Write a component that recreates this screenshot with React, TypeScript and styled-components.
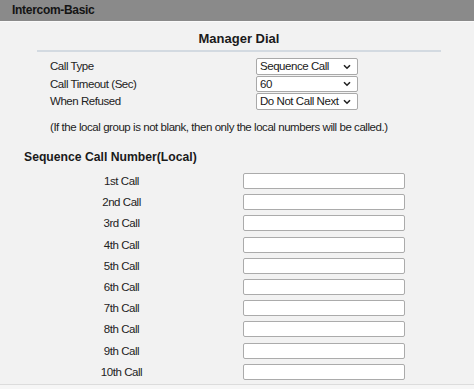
import styled, { createGlobalStyle } from "styled-components";

const GlobalStyle = createGlobalStyle`
  html, body {
    margin: 0;
    padding: 0;
    background: #f2f2f2;
  }
  body {
    font-family: "Liberation Sans", Arial, sans-serif;
    color: #222;
  }
`;

const Page = styled.div`
  width: 474px;
  height: 389px;
  overflow: hidden;
  background: #f2f2f2;
  display: flex;
  flex-direction: column;
`;

const Header = styled.div`
  height: 21px;
  line-height: 21px;
  background: #8a8a8a;
  border-bottom: 1px solid #fafafa;
  padding-left: 12px;
  font-size: 12px;
  font-weight: bold;
  letter-spacing: -0.3px;
  color: #141414;
`;

const Panel = styled.div`
  margin: 0 33px 0 37px;
  display: flex;
  flex-direction: column;
`;

const PanelTitle = styled.div`
  text-align: center;
  font-size: 13px;
  line-height: 16px;
  font-weight: bold;
  color: #1a1a1a;
  padding-top: 9px;
  height: 19px;
  border-bottom: 2px solid #d3dae1;
`;

const SettingRows = styled.div`
  display: flex;
  flex-direction: column;
  gap: 1.5px;
  margin-top: 6px;
  padding-left: 13px;
`;

const SettingRow = styled.div`
  display: grid;
  grid-template-columns: 206px 102px;
  align-items: center;
  height: 16px;
`;

const Label = styled.span`
  font-size: 11.5px;
  letter-spacing: -0.45px;
  color: #222;
  white-space: nowrap;
`;

const SelectBox = styled.div`
  position: relative;
  width: 102px;
  height: 16.5px;
  box-sizing: border-box;
  border: 1px solid #a9a9a9;
  border-radius: 2px;
  background: #fff;
  font-size: 11.5px;
  letter-spacing: -0.45px;
  line-height: 14px;
  padding-left: 3px;
  color: #1a1a1a;
  white-space: nowrap;
`;

const Chevron = styled.svg`
  position: absolute;
  right: 6px;
  top: 4.5px;
`;

const Note = styled.div`
  font-size: 11.5px;
  line-height: 14px;
  letter-spacing: -0.45px;
  color: #222;
  padding-left: 13px;
  margin-top: 11px;
  white-space: nowrap;
`;

const SectionTitle = styled.div`
  margin: 15.5px 0 0 24px;
  font-size: 12.2px;
  line-height: 15px;
  font-weight: bold;
  color: #1a1a1a;
`;

const CallList = styled.div`
  display: flex;
  flex-direction: column;
  gap: 5.2px;
  margin-top: 8.5px;
  padding-left: 24px;
`;

const CallRow = styled.div`
  display: grid;
  grid-template-columns: 195px 162px;
  column-gap: 24px;
  align-items: center;
  height: 16px;
`;

const CallLabel = styled.span`
  text-align: center;
  font-size: 11.5px;
  letter-spacing: -0.45px;
  color: #222;
`;

const TextInput = styled.input`
  width: 162px;
  height: 16px;
  box-sizing: border-box;
  border: 1px solid #ababab;
  border-radius: 2px;
  background: #fff;
  padding: 0 3px;
  margin: 0;
  outline: none;
  font: 11px "Liberation Sans", Arial, sans-serif;
`;

const Footer = styled.div`
  margin-top: auto;
  height: 4px;
  border-top: 1px solid #dcdcdc;
  background: #f6f6f6;
`;

const settings = [
  { label: "Call Type", value: "Sequence Call" },
  { label: "Call Timeout (Sec)", value: "60" },
  { label: "When Refused", value: "Do Not Call Next" },
];

const calls = ["1st", "2nd", "3rd", "4th", "5th", "6th", "7th", "8th", "9th", "10th"];

function Select({ value }: { value: string }) {
  return (
    <SelectBox>
      {value}
      <Chevron width="8" height="6" viewBox="0 0 8 6">
        <path d="M1 1.2 L4 4.2 L7 1.2" fill="none" stroke="#222" strokeWidth="1.6" />
      </Chevron>
    </SelectBox>
  );
}

export default function App() {
  return (
    <Page>
      <GlobalStyle />
      <Header>Intercom-Basic</Header>
      <Panel>
        <PanelTitle>Manager Dial</PanelTitle>
        <SettingRows>
          {settings.map((s) => (
            <SettingRow key={s.label}>
              <Label>{s.label}</Label>
              <Select value={s.value} />
            </SettingRow>
          ))}
        </SettingRows>
        <Note>(If the local group is not blank, then only the local numbers will be called.)</Note>
      </Panel>
      <SectionTitle>Sequence Call Number(Local)</SectionTitle>
      <CallList>
        {calls.map((c) => (
          <CallRow key={c}>
            <CallLabel>{c} Call</CallLabel>
            <TextInput type="text" />
          </CallRow>
        ))}
      </CallList>
      <Footer />
    </Page>
  );
}
